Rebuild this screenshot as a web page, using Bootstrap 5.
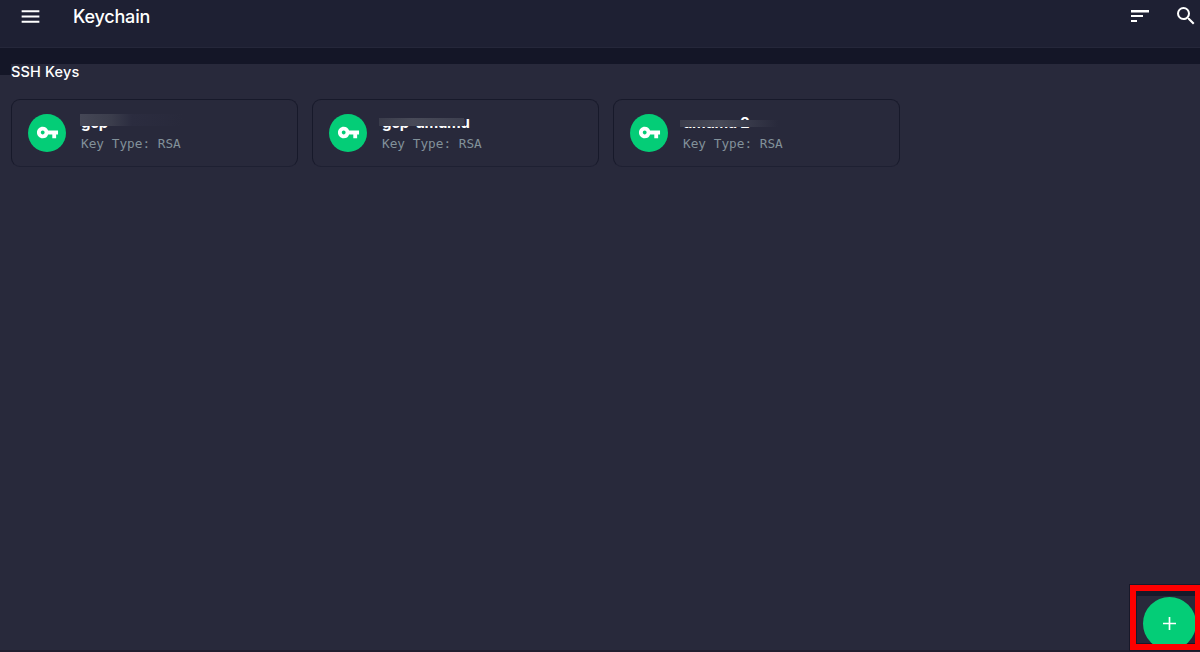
<!DOCTYPE html>
<html lang="en">

<head>
    <meta charset="UTF-8">
    <meta name="viewport" content="width=device-width, initial-scale=1">
    <title>Keychain</title>
    <link rel="stylesheet" href="https://cdn.jsdelivr.net/npm/bootstrap@5.3.3/dist/css/bootstrap.min.css">
    <script src="https://cdn.jsdelivr.net/npm/bootstrap@5.3.3/dist/js/bootstrap.bundle.min.js"></script>
    <style>
        body {
            background-color: #28293b;
            color: #fff;
            font-family: 'Inter', 'Lato', sans-serif;
            height: 100vh;
            overflow: hidden;
            border-bottom: 2px solid #211f30;
        }

        svg {
            display: block;
        }

        .topbar {
            height: 48px;
            background-color: #1e2033;
            border-bottom: 1px solid #25273a;
            padding: 4px 2px 0 18px;
        }

        .topbar h1 {
            font-size: 18px;
            line-height: 25px;
            font-weight: 500;
            letter-spacing: -0.2px;
            margin-left: 30px;
        }

        .icon-btn {
            background: none;
            border: 0;
            padding: 0;
            color: #fff;
        }

        .top-actions {
            gap: 22px;
        }

        .strip {
            height: 16px;
            background-color: #141627;
        }

        .section-title {
            font-size: 14.5px;
            line-height: 16px;
            font-weight: 500;
            letter-spacing: 0.15px;
            padding-left: 11px;
            background: linear-gradient(#141627, #141627) 0 0 / 11px 11px no-repeat;
        }

        .key-list {
            gap: 14px;
            padding: 19px 11px 0;
        }

        .key-item {
            width: 287px;
            height: 68px;
            border: 1px solid #17192a;
            border-bottom-color: #1e2032;
            border-radius: 9px;
            gap: 15px;
            padding: 0 15px 1px 16px;
        }

        .key-icon {
            width: 38px;
            height: 38px;
            background-color: #04cd77;
        }

        .key-name {
            font-size: 15px;
            line-height: 20px;
            font-weight: 700;
            letter-spacing: -0.3px;
            white-space: nowrap;
        }

        .key-type {
            font-family: 'DejaVu Sans Mono', monospace;
            font-size: 12.75px;
            line-height: 20px;
            padding-top: 1px;
            margin-bottom: -1px;
            color: #82919a;
        }

        /* soft patches hiding the upper part of the key names */
        .smudge {
            position: absolute;
            left: -1px;
        }

        .smudge-a {
            top: 1px;
            width: 104px;
            height: 12px;
            background: linear-gradient(90deg, #454756, #3b3d4c 30%, #2b2c3f 50%, #28293b);
        }

        .smudge-b {
            top: 5px;
            left: -3px;
            width: 85px;
            height: 8px;
            background: linear-gradient(90deg, #3a3c4b, #484a58 40%, #3d3f4f);
        }

        .smudge-b::before,
        .smudge-c::before {
            content: '';
            position: absolute;
            left: 0;
            right: 0;
            bottom: 100%;
            height: 5px;
            background-color: #28293b;
        }

        .smudge-c {
            top: 7px;
            left: -3px;
            width: 98px;
            height: 7px;
            background: linear-gradient(90deg, #3a3c4b, #484a58 40%, #3a3c4c 65%, #28293b);
        }

        .smudge-c::before {
            right: 38px;
            height: 6px;
        }

        .add-frame {
            position: absolute;
            right: 0;
            bottom: 2px;
            width: 70px;
            height: 65px;
            border: 6px solid #fe0000;
            border-right-width: 5px;
            outline: 1px solid #17192a;
            overflow: hidden;
            padding: 6px 0 0 7px;
            background: linear-gradient(#17192a, #17192a) 0 0 / 100% 5px no-repeat, linear-gradient(#17192a, #17192a) 0 0 / 1px 100% no-repeat, linear-gradient(#17192a, #17192a) 0 100% / 100% 1px no-repeat, #28293b;
        }

        .add-btn {
            width: 53px;
            height: 53px;
            border: 0;
            padding: 0;
            background-color: #04cd77;
        }
    </style>
</head>

<body>
    <header class="topbar d-flex align-items-start justify-content-between">
        <div class="d-flex">
            <button class="icon-btn" aria-label="Menu">
                <svg width="25" height="25" viewBox="0 0 24 24" fill="currentColor"><path d="M3.5 18h17v-2h-17v2zm0-5h17v-2h-17v2zm0-7v2h17V6z" /></svg>
            </button>
            <h1 class="mb-0">Keychain</h1>
        </div>
        <div class="top-actions d-flex">
            <button class="icon-btn" aria-label="Sort">
                <svg width="24" height="24" viewBox="0 0 24 24" fill="currentColor"><path d="M3 18h6v-2H3v2zM3 6v2.500h18V6H3zm0 7h12v-2H3v2z" /></svg>
            </button>
            <button class="icon-btn" aria-label="Search">
                <svg width="24" height="24" viewBox="0 0 24 24" fill="currentColor"><path d="M15.5 14h-.79l-.28-.27A6.47 6.47 0 0 0 16 9.5 6.5 6.5 0 1 0 9.5 16c1.61 0 3.09-.59 4.23-1.57l.27.28v.79l5 4.99L20.49 19l-4.99-5zm-6 0C7.01 14 5 11.99 5 9.5S7.01 5 9.5 5 14 7.01 14 9.5 11.99 14 9.5 14z" /></svg>
            </button>
        </div>
    </header>
    <div class="strip"></div>

    <main>
        <h2 class="section-title mb-0">SSH Keys</h2>
        <div class="key-list d-flex">
            <div class="key-item d-flex align-items-center">
                <div class="key-icon rounded-circle d-flex align-items-center justify-content-center">
                    <svg width="23" height="23" viewBox="0 0 24 24" fill="#fff"><path d="M12.65 10A5.99 5.99 0 0 0 7 6c-3.31 0-6 2.69-6 6s2.69 6 6 6a5.99 5.99 0 0 0 5.65-4H17v4h4v-4h2v-4H12.65zM7 14c-1.1 0-2-.9-2-2s.9-2 2-2 2 .9 2 2-.9 2-2 2z" /></svg>
                </div>
                <div>
                    <div class="key-name position-relative">gcp<span class="smudge smudge-a"></span></div>
                    <div class="key-type">Key Type: RSA</div>
                </div>
            </div>
            <div class="key-item d-flex align-items-center">
                <div class="key-icon rounded-circle d-flex align-items-center justify-content-center">
                    <svg width="23" height="23" viewBox="0 0 24 24" fill="#fff"><path d="M12.65 10A5.99 5.99 0 0 0 7 6c-3.31 0-6 2.69-6 6s2.69 6 6 6a5.99 5.99 0 0 0 5.65-4H17v4h4v-4h2v-4H12.65zM7 14c-1.1 0-2-.9-2-2s.9-2 2-2 2 .9 2 2-.9 2-2 2z" /></svg>
                </div>
                <div>
                    <div class="key-name position-relative">gcp-umumu<span class="smudge smudge-b"></span></div>
                    <div class="key-type">Key Type: RSA</div>
                </div>
            </div>
            <div class="key-item d-flex align-items-center">
                <div class="key-icon rounded-circle d-flex align-items-center justify-content-center">
                    <svg width="23" height="23" viewBox="0 0 24 24" fill="#fff"><path d="M12.65 10A5.99 5.99 0 0 0 7 6c-3.31 0-6 2.69-6 6s2.69 6 6 6a5.99 5.99 0 0 0 5.65-4H17v4h4v-4h2v-4H12.65zM7 14c-1.1 0-2-.9-2-2s.9-2 2-2 2 .9 2 2-.9 2-2 2z" /></svg>
                </div>
                <div>
                    <div class="key-name position-relative">umumu 2<span class="smudge smudge-c"></span></div>
                    <div class="key-type">Key Type: RSA</div>
                </div>
            </div>
        </div>
    </main>

    <div class="add-frame">
        <button class="add-btn rounded-circle d-flex align-items-center justify-content-center" aria-label="Add">
            <svg width="13" height="13" viewBox="0 0 14 14" stroke="#fff" stroke-width="1.8"><path d="M7 0v14M0 7h14" /></svg>
        </button>
    </div>
</body>

</html>
